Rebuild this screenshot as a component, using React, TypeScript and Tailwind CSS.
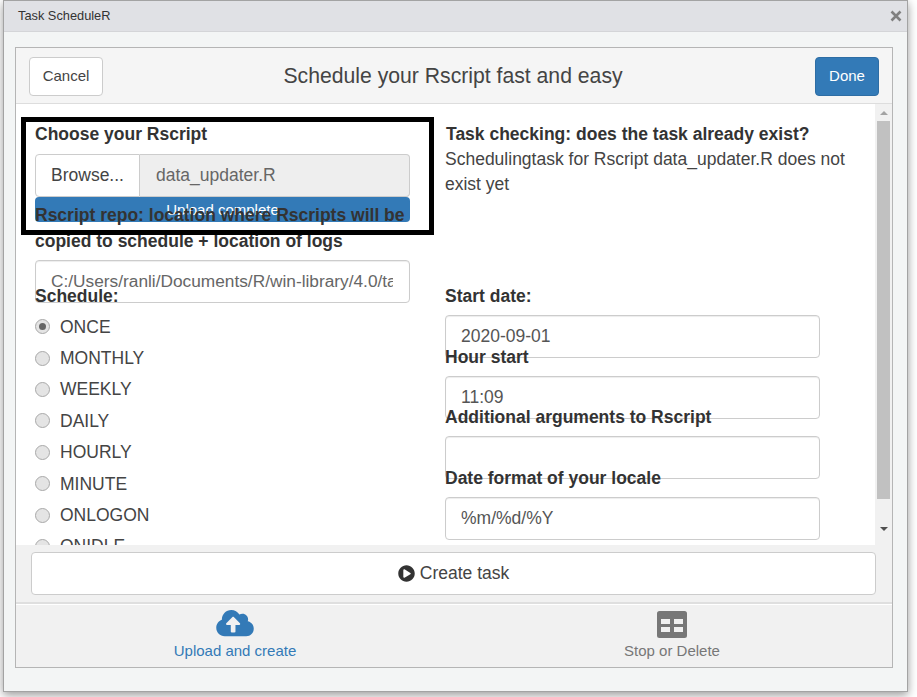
import React from "react";
import { FaCloudUploadAlt, FaPlayCircle } from "react-icons/fa";

const radios = ["ONCE", "MONTHLY", "WEEKLY", "DAILY", "HOURLY", "MINUTE", "ONLOGON", "ONIDLE"];

const inputClass =
  "h-[43px] w-[375px] shrink-0 rounded border border-[#ccc] bg-white px-[15px] flex items-center whitespace-nowrap text-[#555] shadow-[inset_0_1px_1px_rgba(0,0,0,0.075)]";

const RadioDot: React.FC<{ checked?: boolean }> = ({ checked }) => (
  <span className="w-[15px] h-[15px] rounded-full border border-[#a9a9a9] bg-[#e4e4e4] flex items-center justify-center shrink-0">
    {checked && <span className="w-[7px] h-[7px] rounded-full bg-[#666]" />}
  </span>
);

const RightField: React.FC<{ label: string; value?: string; className?: string }> = ({
  label,
  value,
  className,
}) => (
  <div className={className}>
    <div className="relative z-10 h-[25px] leading-[25px] font-bold">{label}</div>
    <div className={inputClass + " mt-[6px]"}>{value}</div>
  </div>
);

const App: React.FC = () => {
  return (
    <div
      className="w-[917px] h-[697px] overflow-hidden bg-white text-[#333] text-[17.5px]"
      style={{ fontFamily: '"Liberation Sans", Arial, sans-serif' }}
    >
      <div className="relative ml-[3px] w-[905px] h-[692px] border border-[#a3a3a3] bg-[#f3f5f5] shadow-[0_3px_9px_rgba(0,0,0,0.4)]">
        <div className="h-[31px] bg-[#e0e1e5] border-b border-[#d4d5d8] flex items-center justify-between pl-[14px] pr-[5px]">
          <span className="text-[12.8px] text-[#333]">Task ScheduleR</span>
          <svg width="12" height="12" viewBox="0 0 12 12" className="mb-[1px]">
            <path d="M1.5 1.5l9 9M10.5 1.5l-9 9" stroke="#808080" strokeWidth="2.6" />
          </svg>
        </div>

        <div className="mt-[15px] ml-[11px] w-[878px] h-[621px] border border-[#b5b5b5] bg-[#f1f1f1] flex flex-col">
          {/* header */}
          <div className="h-[56px] shrink-0 bg-[#f5f5f5] border-b border-[#ddd] flex items-center justify-between pl-[13px] pr-[13px] pt-[1px]">
            <div className="w-[74px] h-[39px] rounded border border-[#ccc] bg-white flex items-center justify-center text-[15px] text-[#444]">
              Cancel
            </div>
            <div className="text-[21.2px] text-[#444] mr-[12px]">Schedule your Rscript fast and easy</div>
            <div className="w-[64px] h-[39px] rounded border border-[#2e6da4] bg-[#337ab7] flex items-center justify-center text-[15px] text-white">
              Done
            </div>
          </div>

          {/* scroll area */}
          <div className="h-[441px] shrink-0 bg-white flex overflow-hidden relative">
            <div className="flex-1 flex pt-[18px] pl-[19px] overflow-hidden">
              <div className="w-[410px] shrink-0">
                <div className="h-[25px] leading-[25px] font-bold">Choose your Rscript</div>
                <div className="mt-[7px] w-[375px] h-[43px] flex">
                  <div className="w-[105px] h-full rounded-l border border-[#ccc] bg-white flex items-center justify-center text-[#444]">
                    Browse...
                  </div>
                  <div className="flex-1 h-full rounded-r border border-l-0 border-[#ccc] bg-[#eee] px-4 flex items-center text-[#666]">
                    data_updater.R
                  </div>
                </div>
                <div className="w-[375px] h-[25px] rounded bg-[#337ab7] text-white text-[15px] leading-[25px] text-center overflow-hidden">
                  Upload complete
                </div>
                <div className="relative -mt-[19px] leading-[25.5px] font-bold w-[375px]">
                  Rscript repo: location where Rscripts will be copied to schedule + location of logs
                </div>
                <div className={inputClass + " mt-[6px]"}>
                  <span className="block w-[342px] overflow-hidden text-[17.3px] text-[#666]">
                    C:/Users/ranli/Documents/R/win-library/4.0/taskscheduleR
                  </span>
                </div>
                <div className="relative -mt-[19px] h-[25px] leading-[25px] font-bold">Schedule:</div>
                <div className="mt-[2px]">
                  {radios.map((r, i) => (
                    <div key={r} className="h-[31.4px] flex items-center gap-[10px] text-[#444]">
                      <RadioDot checked={i === 0} />
                      <span>{r}</span>
                    </div>
                  ))}
                </div>
              </div>
              <div className="w-[430px] shrink-0">
                <div className="h-[25px] leading-[25px] font-bold pl-[1px]">Task checking: does the task already exist?</div>
                <div className="leading-[25px] w-[405px] text-[#444]">
                  Schedulingtask for Rscript data_updater.R does not exist yet
                </div>
                <RightField label="Start date:" value="2020-09-01" className="mt-[87px]" />
                <RightField label="Hour start" value="11:09" className="-mt-[13px]" />
                <RightField label="Additional arguments to Rscript" className="-mt-[14px]" />
                <RightField label="Date format of your locale" value="%m/%d/%Y" className="-mt-[13px]" />
              </div>
            </div>
            {/* scrollbar */}
            <div className="w-[17px] shrink-0 bg-[#f1f1f1] flex flex-col items-center">
              <div className="h-[17px] flex items-center justify-center">
                <span className="w-0 h-0 border-x-[4px] border-x-transparent border-b-[4px] border-b-[#a3a3a3]" />
              </div>
              <div className="w-[13px] h-[378px] bg-[#c1c1c1]" />
              <div className="flex-1 flex items-center justify-center">
                <span className="mt-[13px] w-0 h-0 border-x-[4px] border-x-transparent border-t-[4px] border-t-[#505050]" />
              </div>
            </div>
          </div>

          {/* create task */}
          <div className="h-[59px] shrink-0 bg-[#f1f1f1] border-b-2 border-[#dfdfdf] pl-[15px] pr-[16px] pt-[7px]">
            <div className="h-[43px] rounded border border-[#ccc] bg-white flex items-center justify-center gap-[5px] text-[#444]">
              <FaPlayCircle className="w-[17px] h-[17px] text-[#333]" />
              <span>Create task</span>
            </div>
          </div>

          {/* tabs */}
          <div className="flex-1 border-t border-white flex">
            <div className="w-1/2 flex flex-col items-center text-[#337ab7]">
              <FaCloudUploadAlt className="w-[38px] h-[30px] mt-[3px]" />
              <span className="text-[15px] leading-[20px] mt-[3px]">Upload and create</span>
            </div>
            <div className="w-1/2 flex flex-col items-center text-[#777]">
              <svg width="30" height="27" viewBox="0 0 30 27" className="mt-[6px] -ml-[2px]">
                <path
                  fillRule="evenodd"
                  fill="currentColor"
                  d="M2.5 0h25A2.5 2.5 0 0 1 30 2.5v22a2.5 2.5 0 0 1-2.5 2.5h-25A2.5 2.5 0 0 1 0 24.5v-22A2.5 2.5 0 0 1 2.5 0zM4 8v5h9V8zM17 8v5h9V8zM4 16v5h9v-5zM17 16v5h9v-5z"
                />
              </svg>
              <span className="text-[15px] leading-[20px] mt-[3px] -ml-[2px]">Stop or Delete</span>
            </div>
          </div>
        </div>

        {/* annotation drawn over the screenshot */}
        <div className="absolute left-[17px] top-[116px] w-[413px] h-[118px] border-[5px] border-black pointer-events-none" />
      </div>
    </div>
  );
};

export default App;
